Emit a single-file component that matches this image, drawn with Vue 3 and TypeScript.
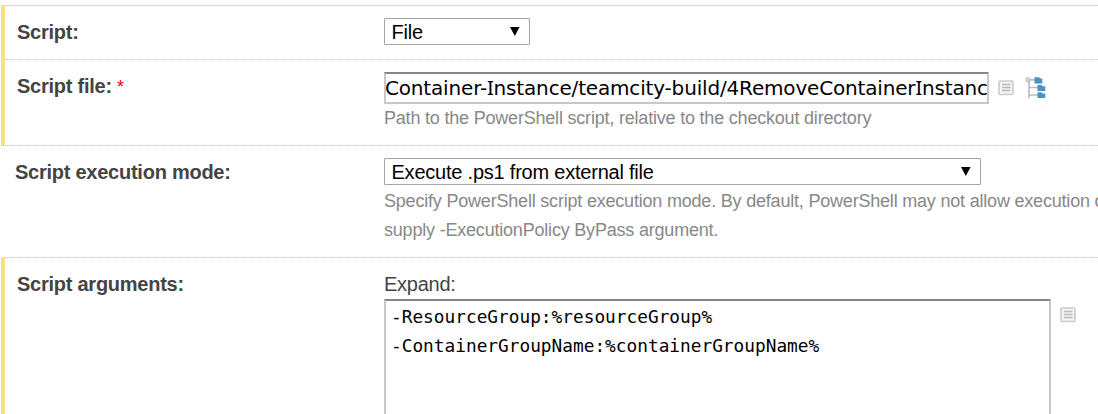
<script setup lang="ts">
const pathParts: string[] = 'Container-Instance/teamcity-build/4RemoveContainerInstance.ps1'.split(/(I)/)

const argumentLines: string[] = [
  '-ResourceGroup:%resourceGroup%',
  '-ContainerGroupName:%containerGroupName%',
]
</script>

<template>
  <main class="settings">
    <section class="row row-script changed">
      <div class="label">Script:</div>
      <div class="field">
        <div class="select small" role="combobox">
          <span>File</span>
          <svg class="arrow" width="10" height="9" viewBox="0 0 10 9"><path d="M0 0H9.6L4.8 9Z" /></svg>
        </div>
      </div>
    </section>

    <section class="row row-file changed">
      <div class="label">Script file: <span class="required">*</span></div>
      <div class="field">
        <div class="line">
          <div class="input"><span v-for="(part, i) in pathParts" :key="i" :class="{ serifed: part === 'I' }">{{ part }}</span></div>
          <svg class="list-icon" width="16" height="16" viewBox="0 0 16 16">
            <rect x="1" y="1" width="14" height="13.5" rx="1" fill="#f3f3f3" stroke="#cbcbcb" stroke-width="1.6" />
            <path d="M4 4.5h8.5M4 7.5h8.5M4 10.5h8.5" stroke="#b8b8b8" stroke-width="1.4" />
          </svg>
          <svg class="tree-icon" width="21" height="22" viewBox="0 0 21 22">
            <path d="M4 3V21M3.5 2.8H10M4 10.5H13M4 18H13" stroke="#bdbdbd" stroke-width="1.7" fill="none" />
            <circle cx="3" cy="2.7" r="2" fill="#ddd" stroke="#b2b2b2" />
            <path d="M9.5 .3h4.5l1 1.2H17.3v5H9.5ZM12.5 8h4l1 1.2H20.3v4.8H12.5ZM12.5 15.2h4l1 1.2H20.3v4.6H12.5Z" fill="#4594c9" />
          </svg>
        </div>
        <div class="note">Path to the PowerShell script, relative to the checkout directory</div>
      </div>
    </section>

    <section class="row row-mode">
      <div class="label">Script execution mode:</div>
      <div class="field">
        <div class="select wide" role="combobox">
          <span>Execute .ps1 from external file</span>
          <svg class="arrow" width="10" height="9" viewBox="0 0 10 9"><path d="M0 0H9.6L4.8 9Z" /></svg>
        </div>
        <div class="note">
          Specify PowerShell script execution mode. By default, PowerShell may not allow execution of<br />
          supply -ExecutionPolicy ByPass argument.
        </div>
      </div>
    </section>

    <section class="row row-args changed">
      <div class="label">Script arguments:</div>
      <div class="field">
        <div class="expand">Expand:</div>
        <div class="line top">
          <div class="textarea">
            <div v-for="line in argumentLines" :key="line">{{ line }}</div>
          </div>
          <svg class="list-icon" width="16" height="16" viewBox="0 0 16 16">
            <rect x="1" y="1" width="14" height="13.5" rx="1" fill="#f3f3f3" stroke="#cbcbcb" stroke-width="1.6" />
            <path d="M4 4.5h8.5M4 7.5h8.5M4 10.5h8.5" stroke="#b8b8b8" stroke-width="1.4" />
          </svg>
        </div>
      </div>
    </section>
  </main>
</template>

<style>
body { background: #fff; overflow: hidden; }
</style>

<style scoped>
.settings {
  box-sizing: border-box;
  width: 1098px;
  height: 414px;
  padding: 5px 0 0 1px;
  overflow: hidden;
  font-family: "Liberation Sans", Arial, sans-serif;
  font-size: 20px;
  letter-spacing: -0.25px;
  color: #444;
}
.row {
  box-sizing: border-box;
  display: grid;
  grid-template-columns: 383px 1fr;
  background: repeating-linear-gradient(90deg, #c8c8c8 0 1px, #f0f0f0 1px 2px) 0 0 / 100% 1px no-repeat;
}
.changed { box-shadow: inset 4px 0 #ffdf80; }
.row-script { height: 54px; }
.row-file { height: 86px; }
.row-mode { height: 112px; }
.row-args { height: 160px; }
.label {
  padding: 15px 0 0 16px;
  font-weight: bold;
  line-height: 24px;
  white-space: nowrap;
}
.row-mode .label { padding-left: 14px; }
.required { color: #f00; font-size: 18px; font-weight: normal; }
.field { padding-top: 13px; min-width: 0; white-space: nowrap; }
.select {
  box-sizing: border-box;
  display: flex;
  align-items: center;
  justify-content: space-between;
  height: 27px;
  padding: 0 9px 0 6.5px;
  border: 1px solid #a5a5a5;
  border-radius: 1px;
  line-height: 27px;
  letter-spacing: -0.22px;
  color: #000;
}
.select span { padding-top: 1px; }
.small { width: 146px; }
.wide { width: 597px; }
.arrow { flex: none; margin-bottom: 1px; }
.line { display: flex; align-items: center; }
.top { align-items: flex-start; }
.input {
  box-sizing: border-box;
  width: 605px;
  height: 32px;
  border: 2px solid #c8c8c8;
  border-top-color: #858585;
  overflow: hidden;
  font: 20px/28px "DejaVu Sans", sans-serif;
  letter-spacing: -0.17px;
  text-indent: -1px;
  color: #000;
}
.serifed { font-family: "Noto Sans", sans-serif; line-height: 1; }
.list-icon { margin-left: 9px; flex: none; }
.tree-icon { margin-left: 11px; flex: none; }
.note { font-size: 18px; line-height: 29px; letter-spacing: -0.2px; color: #888; }
.row-file .note { line-height: 28px; }
.row-mode .note { padding-top: 2px; }
.expand { line-height: 28px; padding-bottom: 1px; }
.textarea {
  box-sizing: border-box;
  width: 667px;
  height: 140px;
  padding: 1px 5px;
  border: 2px solid #c8c8c8;
  border-top-color: #858585;
  font: 17.8px/29px "DejaVu Sans Mono", monospace;
  letter-spacing: 0;
  color: #000;
}
.top .list-icon { margin-top: 8px; }
</style>
